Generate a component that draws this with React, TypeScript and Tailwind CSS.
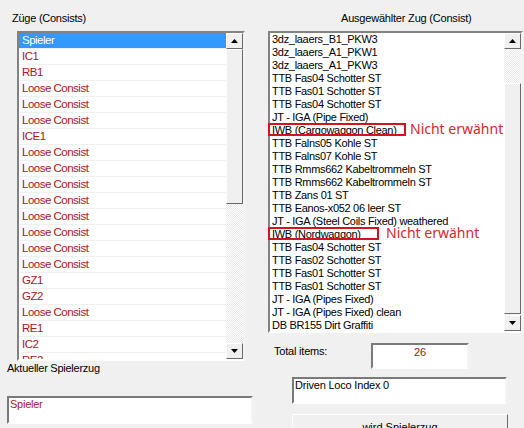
import React from "react";

const leftItems = [
  "Spieler", "IC1", "RB1", "Loose Consist", "Loose Consist", "Loose Consist", "ICE1",
  "Loose Consist", "Loose Consist", "Loose Consist", "Loose Consist", "Loose Consist",
  "Loose Consist", "Loose Consist", "Loose Consist", "GZ1", "GZ2", "Loose Consist",
  "RE1", "IC2", "RE2",
];

const rightItems = [
  "3dz_laaers_B1_PKW3", "3dz_laaers_A1_PKW1", "3dz_laaers_A1_PKW3",
  "TTB Fas04 Schotter ST", "TTB Fas01 Schotter ST", "TTB Fas04 Schotter ST",
  "JT - IGA (Pipe Fixed)", "IWB (Cargowaggon Clean)", "TTB Falns05 Kohle ST",
  "TTB Falns07 Kohle ST", "TTB Rmms662 Kabeltrommeln ST", "TTB Rmms662 Kabeltrommeln ST",
  "TTB Zans 01 ST", "TTB Eanos-x052 06 leer ST", "JT - IGA (Steel Coils Fixed) weathered",
  "IWB (Nordwaggon)", "TTB Fas04 Schotter ST", "TTB Fas02 Schotter ST",
  "TTB Fas01 Schotter ST", "TTB Fas01 Schotter ST", "JT - IGA (Pipes Fixed)",
  "JT - IGA (Pipes Fixed) clean", "DB BR155 Dirt Graffiti",
];

function Arrow({ up }: { up: boolean }) {
  return (
    <svg width="7" height="4" viewBox="0 0 7 4">
      {up ? <polygon points="3.5,0 7,4 0,4" fill="#000" /> : <polygon points="0,0 7,0 3.5,4" fill="#000" />}
    </svg>
  );
}

function ScrollButton({ up }: { up: boolean }) {
  return (
    <div className="h-[16px] w-[17px] shrink-0 bg-[#f0f0f0] border border-t-[#ffffff] border-l-[#ffffff] border-r-[#696969] border-b-[#696969] flex items-center justify-center">
      <Arrow up={up} />
    </div>
  );
}

function Scrollbar({ before, thumb }: { before: number; thumb: number }) {
  return (
    <div className="w-[17px] shrink-0 h-full flex flex-col">
      <ScrollButton up />
      <div className="flex-1 flex flex-col bg-[repeating-conic-gradient(#ffffff_0%_25%,#e9e9e9_0%_50%)] [background-size:2px_2px]">
        <div className="shrink-0" style={{ height: before }} />
        <div
          className="shrink-0 bg-[#f0f0f0] border border-t-[#ffffff] border-l-[#ffffff] border-r-[#696969] border-b-[#696969]"
          style={{ height: thumb }}
        />
      </div>
      <ScrollButton up={false} />
    </div>
  );
}

const sunken =
  "bg-white border-2 border-t-[#7a7a7a] border-l-[#7a7a7a] border-r-[#f4f4f4] border-b-[#ffffff]";

export default function App() {
  return (
    <div className="relative w-[524px] h-[428px] overflow-hidden bg-[#f0f0f0] flex font-['Liberation_Sans',Arial,sans-serif] text-black">
      {/* Left column */}
      <div className="w-[262px] shrink-0 flex flex-col">
        <div className="shrink-0 pl-[12px] pt-[12px] h-[31px] text-[11px] leading-[13px] tracking-[-0.25px]">Züge (Consists)</div>
        <div className="shrink-0 ml-[17px] w-[228px] h-[330px] border-2 border-t-[#828282] border-l-[#828282] border-r-[#f4f4f4] border-b-[#ffffff] bg-white flex">
          <div className="flex-1 overflow-hidden flex flex-col">
            {leftItems.map((t, i) => (
              <div
                key={i}
                className={
                  i === 0
                    ? "h-[16px] shrink-0 border-b border-[#f0f0f0] bg-[#3399ff] text-white pl-[3px] text-[11.5px] leading-[15px] tracking-[-0.5px]"
                    : "h-[16px] shrink-0 border-b border-[#f0f0f0] text-[#b0151a] pl-[3px] text-[11.5px] leading-[15px] tracking-[-0.5px]"
                }
              >
                {t}
              </div>
            ))}
          </div>
          <Scrollbar before={0} thumb={155} />
        </div>
        <div className="shrink-0 pl-[7px] pt-[1px] text-[11px] leading-[13px] tracking-[-0.25px]">Aktueller Spielerzug</div>
        <div className={"shrink-0 ml-[7px] mt-[21px] w-[246px] h-[28px] pl-[1px] text-[11px] leading-[13px] text-[#b0151a] tracking-[-0.25px] " + sunken}>
          Spieler
        </div>
      </div>

      {/* Right column */}
      <div className="flex-1 flex flex-col">
        <div className="shrink-0 pl-[79px] pt-[12px] h-[31px] text-[11px] leading-[13px] tracking-[-0.2px]">Ausgewählter Zug (Consist)</div>
        <div className="shrink-0 ml-[6px] w-[255px] h-[302px] border-2 border-t-[#828282] border-l-[#828282] border-r-[#f4f4f4] border-b-[#ffffff] bg-white flex">
          <div className="flex-1 overflow-hidden flex flex-col pl-[2px]">
            {rightItems.map((t, i) => (
              <div key={i} className="h-[13px] shrink-0 text-[11px] leading-[12px] tracking-[-0.3px] whitespace-nowrap">
                {t}
              </div>
            ))}
          </div>
          <Scrollbar before={34} thumb={231} />
        </div>
        <div className="shrink-0 flex items-start mt-[10px]">
          <div className="pl-[12px] pt-[2px] w-[109px] text-[11px] leading-[13px] tracking-[-0.2px]">Total items:</div>
          <div className={"w-[98px] h-[26px] text-center text-[11px] leading-[13px] pt-[1px] text-[#8b1a1a] " + sunken}>
            26
          </div>
        </div>
        <div className={"shrink-0 ml-[30px] mt-[8px] w-[215px] h-[27px] pl-[1px] text-[11px] leading-[13px] tracking-[-0.2px] " + sunken}>
          Driven Loco Index 0
        </div>
        <div className="shrink-0 ml-[30px] mt-[10px] w-[216px] h-[26px] bg-[#f0f0f0] border border-t-[#ffffff] border-l-[#ffffff] border-r-[#696969] border-b-[#696969] text-center text-[11px] leading-[13px] pt-[6px]">
          wird Spielerzug
        </div>
      </div>

      {/* Annotations */}
      <div className="absolute left-[268px] top-[123px] w-[138px] h-[13px] border-2 border-[#d4141b]" />
      <div className="absolute left-[410px] top-[121px] text-[14px] leading-[16px] text-[#d42a2a] font-['Noto_Sans',sans-serif]">Nicht erwähnt</div>
      <div className="absolute left-[268px] top-[227px] w-[111px] h-[13px] border-2 border-[#d4141b]" />
      <div className="absolute left-[386px] top-[225px] text-[14px] leading-[16px] text-[#d42a2a] font-['Noto_Sans',sans-serif]">Nicht erwähnt</div>
    </div>
  );
}
